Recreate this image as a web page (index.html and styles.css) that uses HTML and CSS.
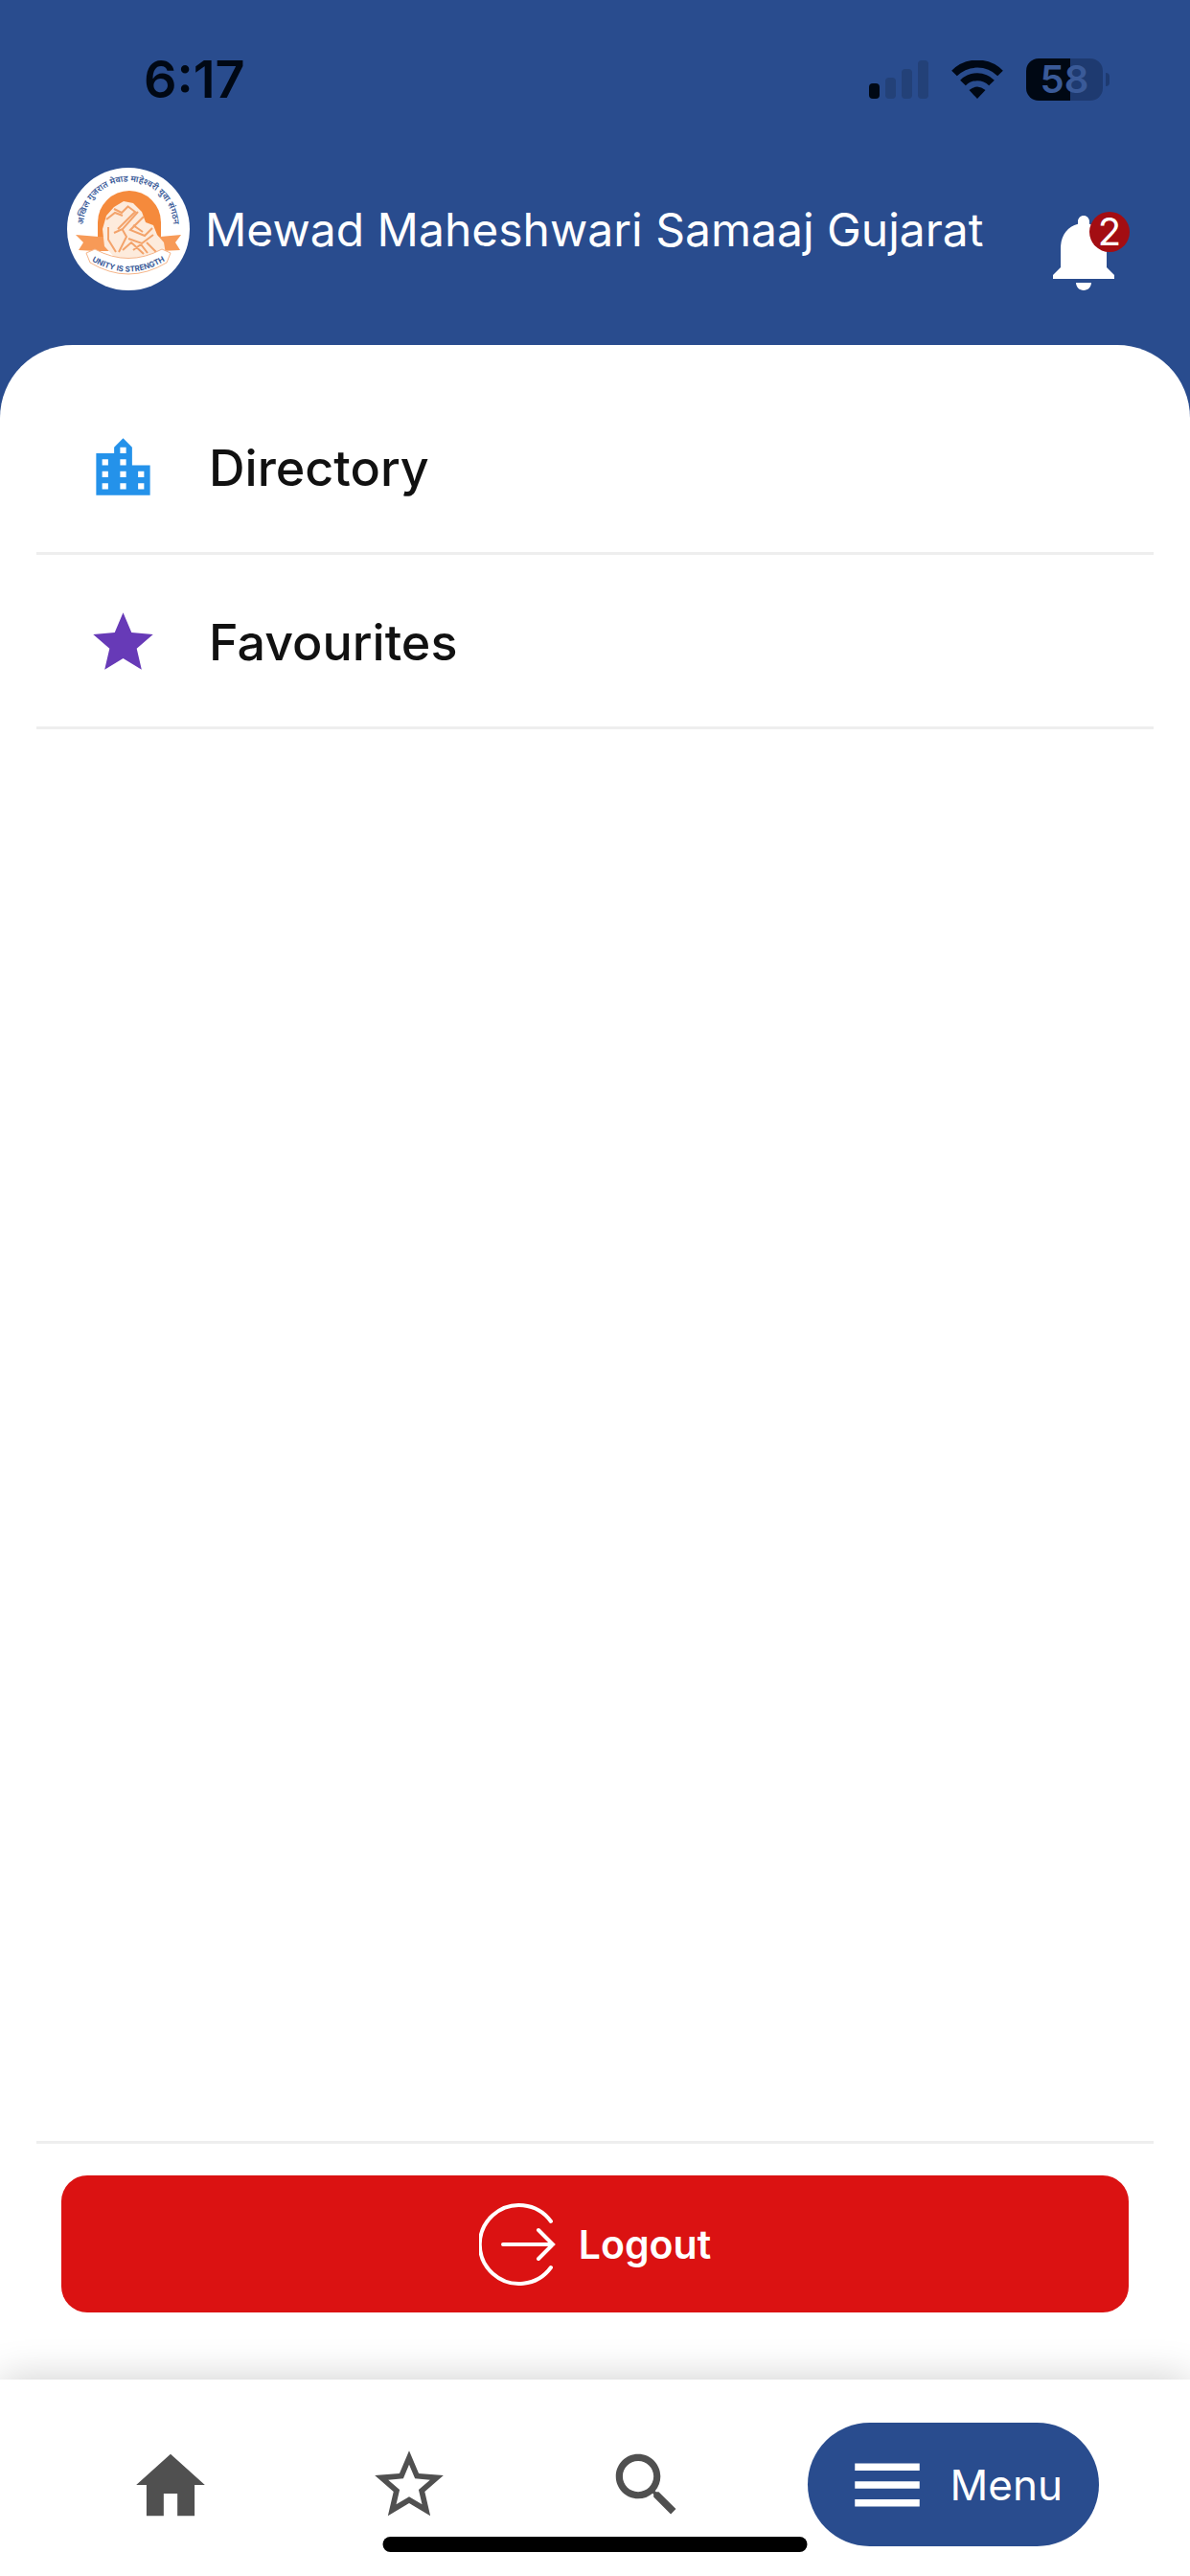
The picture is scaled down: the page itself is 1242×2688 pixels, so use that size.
FILE: index.html
```html
<!DOCTYPE html>
<html lang="en">
<head>
    <meta charset="UTF-8">
    <meta name="viewport" content="width=device-width, initial-scale=1.0">
    <title>Mewad Maheshwari Samaaj Gujarat</title>
    <link rel="stylesheet" href="styles.css">
</head>
<body>
    <div class="app">
        <!-- Status bar -->
        <div class="status-bar">
            <span class="time">6:17</span>
            <div class="status-icons">
                <svg class="signal" viewBox="0 0 62 40">
                    <rect x="0" y="24" width="11" height="16" rx="4"/>
                    <g class="dim">
                        <rect x="17" y="18" width="11" height="22" rx="4"/>
                        <rect x="34" y="9" width="11" height="31" rx="4"/>
                        <rect x="51" y="0" width="11" height="40" rx="4"/>
                    </g>
                </svg>
                <svg class="wifi" viewBox="0 0 54 40">
                    <path d="M3 13.500A34 34 0 0 1 51 13.500" fill="none" stroke="#000814" stroke-width="8"/>
                    <path d="M12 23.500A21 21 0 0 1 42 23.500" fill="none" stroke="#000814" stroke-width="8"/>
                    <path d="M27 40L18.500 31Q27 24 35.500 31Z"/>
                </svg>
                <div class="battery"><span>58</span></div>
            </div>
        </div>

        <header class="header">
            <svg class="logo" viewBox="0 0 128 128">
                <defs>
                    <path id="ring" d="M19 75A47 47 0 1 1 109 75"/>
                    <path id="banner" d="M24 96Q64 121 104 96"/>
                </defs>
                <circle cx="64" cy="64" r="64" fill="#fff"/>
                <path d="M32 75V57a33 33 0 0 1 66 0v18z" fill="#f58a3c"/>
                <path d="M9 70l24 2h64l22-2-6 8 5 8-20 1H30L12 86l5-8z" fill="#f79a57"/>
                <path d="M39 82l-2-18 4-14 8-9 10-6 10 2 9 9 4 11 8 3 4 10 7 8 2 12-16 4H50z" fill="#fdebdc"/>
                <path d="M41 54l9-7 8 3M49 43l8 4 7-7M63 40l8 6-18 18M74 46l-16 18-9 4M58 65l4 7-8 16M80 51L66 65l15 6 8-8M69 60l10 7M64 74l14 5 12-9M58 86l9-8 13 12M83 78l10 10M43 62v13l8 13M69 86l8-6 7 9" fill="none" stroke="#f3a36b" stroke-width="2"/>
                <path d="M20 89l9-4q35 19 70 0l9 4-4 10q-40 24-80 0z" fill="#fff" stroke="#f5b58a" stroke-width="1"/>
                <text class="ring-text"><textPath href="#ring" startOffset="50%">अखिल गुजरात मेवाड माहेश्वरी युवा संगठन</textPath></text>
                <text class="banner-text"><textPath href="#banner" startOffset="50%">UNITY IS STRENGTH</textPath></text>
            </svg>
            <h1>Mewad Maheshwari Samaaj Gujarat</h1>
            <button class="bell" aria-label="Notifications">
                <svg viewBox="0 0 24 24"><path d="M12 22c1.100 0 2-.9 2-2h-4c0 1.100.89 2 2 2zm6-6v-5c0-3.070-1.640-5.640-4.500-6.320V4c0-.83-.67-1.500-1.500-1.500s-1.500.67-1.500 1.500v.68C7.630 5.360 6 7.920 6 11v5l-2 2v1h16v-1l-2-2z"/></svg>
                <span class="badge">2</span>
            </button>
        </header>

        <main class="panel">
            <a class="menu-item" href="#">
                <svg class="directory-icon" viewBox="0 0 24 24"><path d="M15 11V5l-3-3-3 3v2H3v14h18V11h-6zm-8 8H5v-2h2v2zm0-4H5v-2h2v2zm0-4H5V9h2v2zm6 8h-2v-2h2v2zm0-4h-2v-2h2v2zm0-4h-2V9h2v2zm0-4h-2V5h2v2zm6 12h-2v-2h2v2zm0-4h-2v-2h2v2z"/></svg>
                Directory
            </a>
            <a class="menu-item" href="#">
                <svg class="favourite-icon" viewBox="0 0 24 24"><path d="M12 17.270L18.180 21l-1.640-7.030L22 9.240l-7.190-.61L12 2 9.190 8.630 2 9.240l5.460 4.730L5.820 21z"/></svg>
                Favourites
            </a>
            <div class="logout-area">
                <button class="logout">
                    <svg viewBox="0 0 80 88">
                        <path d="M75 20A41 41 0 1 0 75 68M25 44H77M62 29L77 44L62 59"/>
                    </svg>
                    Logout
                </button>
            </div>
        </main>

        <!-- Bottom navigation -->
        <nav class="bottom-nav">
            <button class="nav-btn" aria-label="Home">
                <svg viewBox="0 0 24 24"><path d="M10 21v-6.500h4V21h5v-9h3L12 3 2 12h3v9z"/></svg>
            </button>
            <button class="nav-btn" aria-label="Favourites">
                <svg viewBox="0 0 24 24"><path d="M22 9.240l-7.190-.62L12 2 9.190 8.630 2 9.240l5.460 4.730L5.820 21 12 17.270 18.180 21l-1.630-7.030L22 9.240zM12 15.400l-3.760 2.270 1-4.280-3.320-2.880 4.380-.38L12 6.100l1.710 4.040 4.380.38-3.320 2.880 1 4.280L12 15.400z"/></svg>
            </button>
            <button class="nav-btn" aria-label="Search">
                <svg viewBox="0 0 24 24"><path d="M15.500 14h-.79l-.28-.27C15.410 12.590 16 11.110 16 9.500 16 5.910 13.090 3 9.500 3S3 5.910 3 9.500 5.910 16 9.500 16c1.610 0 3.090-.59 4.230-1.570l.27.28v.79l5 4.990L20.490 19l-4.990-5zm-6 0C7.010 14 5 11.990 5 9.500S7.010 5 9.500 5 14 7.010 14 9.500 11.990 14 9.500 14z"/></svg>
            </button>
            <button class="nav-btn active">
                <svg viewBox="0 0 24 24"><path d="M3 18h18v-2H3v2zm0-5h18v-2H3v2zm0-7v2h18V6H3z"/></svg>
                Menu
            </button>
        </nav>
        <div class="home-indicator"></div>
    </div>
</body>
</html>
```

FILE: styles.css
```css
* {
    box-sizing: border-box;
}

body {
    margin: 0;
    font-family: Inter, "Open Sans", sans-serif;
    background-color: #294c8e;
}

button {
    border: none;
    font-family: inherit;
    cursor: pointer;
}

svg {
    display: block;
    flex-shrink: 0;
}

.app {
    position: relative;
    display: flex;
    flex-direction: column;
    min-height: 100vh;
}

/* Status bar */
.status-bar {
    display: flex;
    justify-content: space-between;
    align-items: center;
    height: 167px;
    padding: 0 91px 2px 150px;
    color: #000814;
}

.time {
    font-size: 54px;
    font-weight: 600;
}

.status-icons {
    display: flex;
    align-items: center;
    gap: 24px;
}

.signal {
    width: 62px;
    height: 40px;
    fill: #000814;
}

.dim {
    fill: #234178;
}

.wifi {
    width: 54px;
    height: 40px;
    fill: #000814;
}

.battery {
    position: relative;
    width: 80px;
    height: 44px;
    border-radius: 13px;
    background: linear-gradient(to right, #000814 58%, #1e3a70 58%);
    color: #3a5a98;
    font-size: 40px;
    font-weight: 600;
    line-height: 44px;
    text-align: center;
}

.battery::after {
    content: "";
    position: absolute;
    right: -7px;
    top: 15px;
    width: 4px;
    height: 14px;
    border-radius: 0 4px 4px 0;
    background-color: #1e3a70;
}

/* Header */
.header {
    display: flex;
    align-items: center;
    height: 144px;
    padding: 0 63px 0 70px;
}

.logo {
    width: 128px;
    height: 128px;
}

.ring-text {
    font-family: "Noto Sans", sans-serif;
    font-size: 9px;
    font-weight: 600;
    fill: #3a5a98;
    text-anchor: middle;
}

.banner-text {
    font-size: 8px;
    font-weight: 700;
    fill: #3a5a98;
    text-anchor: middle;
}

.header h1 {
    flex: 1;
    margin: 0 0 0 16px;
    color: #fff;
    font-size: 48px;
    font-weight: 400;
    white-space: nowrap;
}

.bell {
    position: relative;
    align-self: flex-end;
    padding: 0;
    background: none;
}

.bell svg {
    width: 96px;
    height: 96px;
    fill: #fff;
}

.badge {
    position: absolute;
    top: 6px;
    right: 0;
    width: 42px;
    height: 42px;
    border-radius: 50%;
    background-color: #a30d12;
    color: #fff;
    font-size: 40px;
    line-height: 42px;
}

/* Menu list */
.panel {
    flex: 1;
    display: flex;
    flex-direction: column;
    margin-top: 49px;
    padding: 37px 38px 70px;
    border-radius: 76px 76px 0 0;
    background-color: #fff;
}

.menu-item {
    display: flex;
    align-items: center;
    gap: 52px;
    height: 182px;
    padding: 4px 0 0 53px;
    border-bottom: 3px solid #eee;
    color: #111;
    font-size: 52px;
    font-weight: 500;
    text-decoration: none;
}

.menu-item svg {
    width: 75px;
    height: 75px;
}

.directory-icon {
    fill: #2492ea;
}

.favourite-icon {
    fill: #673ab7;
}

.logout-area {
    margin-top: auto;
    padding: 33px 26px 0;
    border-top: 3px solid #eee;
}

.logout {
    display: flex;
    justify-content: center;
    align-items: center;
    gap: 24px;
    width: 100%;
    height: 143px;
    border-radius: 27px;
    background-color: #db1212;
    color: #fff;
    font-size: 41px;
    font-weight: 600;
}

.logout svg {
    width: 80px;
    height: 88px;
    fill: none;
    stroke: #fff;
    stroke-width: 4;
    stroke-linecap: round;
}

/* Bottom navigation */
.bottom-nav {
    display: flex;
    justify-content: space-between;
    align-items: center;
    padding: 45px 95px 31px 97px;
    background-color: #fff;
    box-shadow: 0 0 40px rgba(0, 0, 0, 0.2);
}

.nav-btn {
    display: flex;
    align-items: center;
    gap: 21px;
    height: 129px;
    padding: 0 38px;
    border-radius: 65px;
    background: none;
    font-size: 44px;
}

.nav-btn svg {
    width: 86px;
    height: 86px;
    fill: #505050;
}

.nav-btn.active {
    background-color: #294c8e;
    color: #fff;
}

.nav-btn.active svg {
    width: 90px;
    height: 90px;
    fill: #fff;
}

.home-indicator {
    position: absolute;
    left: 50%;
    bottom: 25px;
    width: 443px;
    height: 16px;
    border-radius: 8px;
    background-color: #000;
    transform: translateX(-50%);
}
```
